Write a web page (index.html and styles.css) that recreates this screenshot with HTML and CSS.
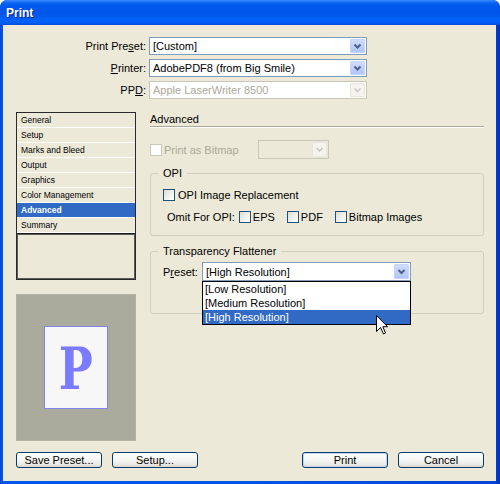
FILE: index.html
```html
<!DOCTYPE html>
<html>
<head>
<meta charset="utf-8">
<title>Print</title>
<link rel="stylesheet" href="styles.css">
</head>
<body>
<div class="window">
  <div class="titlebar"><span class="title">Print</span></div>
  <div class="frame">
    <div class="presets">
      <span class="plabel">Print Pre<u>s</u>et:</span>
      <div class="select"><span class="sel-text">[Custom]</span><span class="arrow"><svg width="15" height="14" viewBox="0 0 15 14"><polyline points="4.5,5.5 7.5,8.5 10.5,5.5" fill="none" stroke="#4D6185" stroke-width="2"/></svg></span></div>
      <span class="plabel"><u>P</u>rinter:</span>
      <div class="select"><span class="sel-text">AdobePDF8 (from Big Smile)</span><span class="arrow"><svg width="15" height="14" viewBox="0 0 15 14"><polyline points="4.5,5.5 7.5,8.5 10.5,5.5" fill="none" stroke="#4D6185" stroke-width="2"/></svg></span></div>
      <span class="plabel">PP<u>D</u>:</span>
      <div class="select disabled"><span class="sel-text">Apple LaserWriter 8500</span><span class="arrow"><svg width="15" height="14" viewBox="0 0 15 14"><polyline points="4.5,5.5 7.5,8.5 10.5,5.5" fill="none" stroke="#C9C7BA" stroke-width="1.5"/></svg></span></div>
    </div>

    <div class="main">
      <div class="sidebar">
        <div class="navlist">
          <div class="nav-item">General</div>
          <div class="nav-item">Setup</div>
          <div class="nav-item">Marks and Bleed</div>
          <div class="nav-item">Output</div>
          <div class="nav-item">Graphics</div>
          <div class="nav-item">Color Management</div>
          <div class="nav-item active">Advanced</div>
          <div class="nav-item">Summary</div>
          <div class="nav-fill"></div>
        </div>
        <div class="preview">
          <div class="page"><span class="page-letter">P</span></div>
        </div>
      </div>

      <div class="content">
        <div class="heading">Advanced</div>
        <div class="bitmap-row">
          <span class="check disabled"></span>
          <span class="bitmap-label">Print as Bitmap</span>
          <div class="select small disabled"><span class="sel-text"></span><span class="arrow"><svg width="15" height="15" viewBox="0 0 15 15"><polyline points="4.5,6 7.5,9 10.5,6" fill="none" stroke="#C9C7BA" stroke-width="1.5"/></svg></span></div>
        </div>

        <fieldset class="group opi">
          <legend>OPI</legend>
          <div class="check-row">
            <span class="check"></span><span>OPI Image Replacement</span>
          </div>
          <div class="omit-row">
            <span class="omit-label">Omit For OPI:</span>
            <span class="check"></span><span class="omit-opt">EPS</span>
            <span class="check"></span><span class="omit-opt">PDF</span>
            <span class="check"></span><span>Bitmap Images</span>
          </div>
        </fieldset>

        <fieldset class="group tf">
          <legend>Transparency Flattener</legend>
          <div class="preset-row">
            <span class="preset-label">P<u>r</u>eset:</span>
            <div class="combo">
              <div class="select tall"><span class="sel-text">[High Resolution]</span><span class="arrow"><svg width="15" height="15" viewBox="0 0 15 15"><polyline points="4.5,6 7.5,9 10.5,6" fill="none" stroke="#4D6185" stroke-width="2"/></svg></span></div>
              <div class="dropdown">
                <div class="dd-item">[Low Resolution]</div>
                <div class="dd-item">[Medium Resolution]</div>
                <div class="dd-item selected">[High Resolution]</div>
              </div>
              <svg class="cursor" width="13" height="20" viewBox="0 0 13 20"><path d="M0.5,0.5 L0.5,16.5 L4.5,12.5 L7.5,19 L9.5,18 L6.8,11.7 L11.5,11.7 Z" fill="#fff" stroke="#000" stroke-width="1"/></svg>
            </div>
          </div>
        </fieldset>
      </div>
    </div>

    <div class="footer">
      <div class="btn-group">
        <button class="btn">Save Preset...</button>
        <button class="btn">Setup...</button>
      </div>
      <div class="btn-group">
        <button class="btn default">Print</button>
        <button class="btn">Cancel</button>
      </div>
    </div>
  </div>
</div>
</body>
</html>
```

FILE: styles.css
```css
html, body {
  margin: 0;
  padding: 0;
  background: #ffffff;
}

body {
  font-family: "Liberation Sans", Arial, sans-serif;
  font-size: 11px;
  color: #000;
}

.window {
  width: 500px;
  height: 484px;
  display: flex;
  flex-direction: column;
  background: linear-gradient(90deg, #0040D0 0px, #0058EE 2px, #0055E5 50%, #0044D6 99%, #0031B8 100%);
  border-radius: 7px 7px 0 0;
  overflow: hidden;
  box-sizing: border-box;
}

.titlebar {
  height: 25px;
  flex: none;
  display: flex;
  align-items: center;
  padding-left: 6px;
  background: linear-gradient(180deg, #3A8CFF 0px, #0A63F2 3px, #0058EE 6px, #0056EA 14px, #0062F8 20px, #005CF5 23px, #0048DA 25px);
  border-radius: 7px 7px 0 0;
}

.title {
  color: #fff;
  font-weight: bold;
  font-size: 12px;
  text-shadow: 1px 1px 0 #0A1E8A;
  margin-top: 1px;
}

.frame {
  flex: 1;
  margin: 0 4px 3px 3px;
  background: #ECE9D8;
  display: flex;
  flex-direction: column;
}

/* top presets */
.presets {
  margin-top: 12px;
  display: grid;
  grid-template-columns: 143px 218px;
  grid-auto-rows: 18px;
  column-gap: 3px;
  row-gap: 4px;
  align-items: center;
}

.plabel {
  text-align: right;
  line-height: 18px;
}

.select {
  display: flex;
  align-items: center;
  height: 18px;
  box-sizing: border-box;
  border: 1px solid #7F9DB9;
  background: #fff;
}

.select.tall {
  height: 19px;
}

.sel-text {
  flex: 1;
  padding-left: 3px;
  white-space: nowrap;
  overflow: hidden;
}

.arrow {
  flex: none;
  width: 15px;
  height: 14px;
  margin-right: 1px;
  border-radius: 2px;
  background: linear-gradient(180deg, #D2DEFC 0%, #BFD0FA 50%, #AEC4F6 100%);
  box-shadow: inset 0 0 0 1px #C5D5FB;
  display: flex;
}

.select.tall .arrow,
.select.small .arrow {
  height: 15px;
}

.select.disabled {
  border-color: #C9C7BA;
}

.select.disabled .sel-text {
  color: #ACA899;
}

.select.disabled .arrow {
  background: #F4F3EE;
  box-shadow: inset 0 0 0 1px #E8E6DC;
}

/* main area */
.main {
  margin-top: 13px;
  padding: 0 12px 0 13px;
  display: flex;
  gap: 14px;
}

.sidebar {
  width: 120px;
  flex: none;
  display: flex;
  flex-direction: column;
}

.navlist {
  height: 168px;
  box-sizing: border-box;
  border: 1px solid #2A2A2A;
  display: flex;
  flex-direction: column;
  background: #ECE9D8;
}

.nav-item {
  height: 14px;
  line-height: 14px;
  border-bottom: 1px solid #FFFFFF;
  padding-left: 4px;
  font-size: 8.5px;
  white-space: nowrap;
}

.nav-item.active {
  background: #316AC5;
  color: #fff;
  font-weight: bold;
}

.nav-fill {
  flex: 1;
  border-top: 1px solid #1A1A1A;
  box-shadow: inset 0 0 0 1px #5A5A5A;
}

.preview {
  margin-top: 14px;
  height: 147px;
  background: #ABAB9D;
  box-shadow: inset 0 0 0 1px #B4B4A6;
  display: flex;
  align-items: center;
  justify-content: center;
}

.page {
  width: 64px;
  height: 83px;
  box-sizing: border-box;
  border: 1px solid #8383F2;
  background: #F7F7F7;
  display: flex;
  align-items: center;
  justify-content: center;
}

.page-letter {
  font-family: "DejaVu Serif", "Liberation Serif", serif;
  font-weight: bold;
  font-size: 58px;
  line-height: 1;
  color: #7B7BFF;
  margin-top: 2px;
  transform: scaleX(0.78);
}

.content {
  flex: 1;
  display: flex;
  flex-direction: column;
}

.heading {
  height: 14px;
  line-height: 15px;
  border-bottom: 1px solid #ACA899;
  box-shadow: 0 1px 0 #FFFFFF;
}

.bitmap-row {
  margin-top: 13px;
  height: 19px;
  display: flex;
  align-items: center;
}

.bitmap-label {
  color: #ACA899;
  margin-left: 2px;
  width: 94px;
}

.select.small {
  width: 71px;
  height: 19px;
  background: #ECE9D8;
  justify-content: flex-end;
}

.select.small .sel-text {
  flex: 1;
}

.check {
  display: inline-block;
  width: 12px;
  height: 12px;
  box-sizing: border-box;
  border: 1px solid #1C5180;
  background: linear-gradient(135deg, #DCDCD7 0%, #F0F0EA 50%, #FFFFFF 100%);
  flex: none;
}

.check.disabled {
  border-color: #CAC8BB;
  background: #FFFFFF;
}

.group {
  margin: 7px 0 0 0;
  border: 1px solid #D0D0BF;
  border-radius: 3px;
  padding: 8px 12px 12px 12px;
  min-width: 0;
}

.group legend {
  padding: 0 5px;
  margin-left: -5px;
  line-height: 14px;
}

.check-row {
  height: 13px;
  display: flex;
  align-items: center;
  gap: 3px;
}

.omit-row {
  margin-top: 9px;
  height: 13px;
  display: flex;
  align-items: center;
  padding-left: 4px;
}

.omit-label {
  margin-right: 4px;
}

.omit-row .check {
  margin-right: 2px;
}

.omit-opt {
  margin-right: 12px;
}

.group.tf {
  margin-top: 8px;
  padding: 4px 12px 32px 12px;
}

.preset-row {
  display: flex;
  align-items: center;
  height: 19px;
}

.preset-label {
  width: 39px;
}

.combo {
  position: relative;
  width: 209px;
}

.dropdown {
  position: absolute;
  left: 0;
  top: 100%;
  width: 209px;
  box-sizing: border-box;
  border: 1px solid #000;
  background: #fff;
  z-index: 2;
}

.dd-item {
  height: 14px;
  line-height: 14px;
  padding-left: 2px;
  white-space: nowrap;
}

.dd-item.selected {
  background: #316AC5;
  color: #fff;
}

.cursor {
  position: absolute;
  left: 174px;
  top: 53px;
  z-index: 3;
}

/* footer */
.footer {
  margin-top: 11px;
  padding: 0 12px 0 13px;
  display: flex;
  justify-content: space-between;
}

.btn-group {
  display: flex;
  gap: 10px;
}

.btn {
  width: 86px;
  height: 16px;
  padding: 0;
  margin: 0;
  box-sizing: border-box;
  border: 1px solid #003C74;
  border-radius: 3px;
  background: linear-gradient(180deg, #FFFFFF 0%, #F6F6F3 45%, #ECEBE6 80%, #D8D4CA 100%);
  font-family: "Liberation Sans", Arial, sans-serif;
  font-size: 11px;
  line-height: 14px;
  color: #000;
}

.btn.default {
  box-shadow: inset 0 0 0 1px #C4D6F7;
}
```
